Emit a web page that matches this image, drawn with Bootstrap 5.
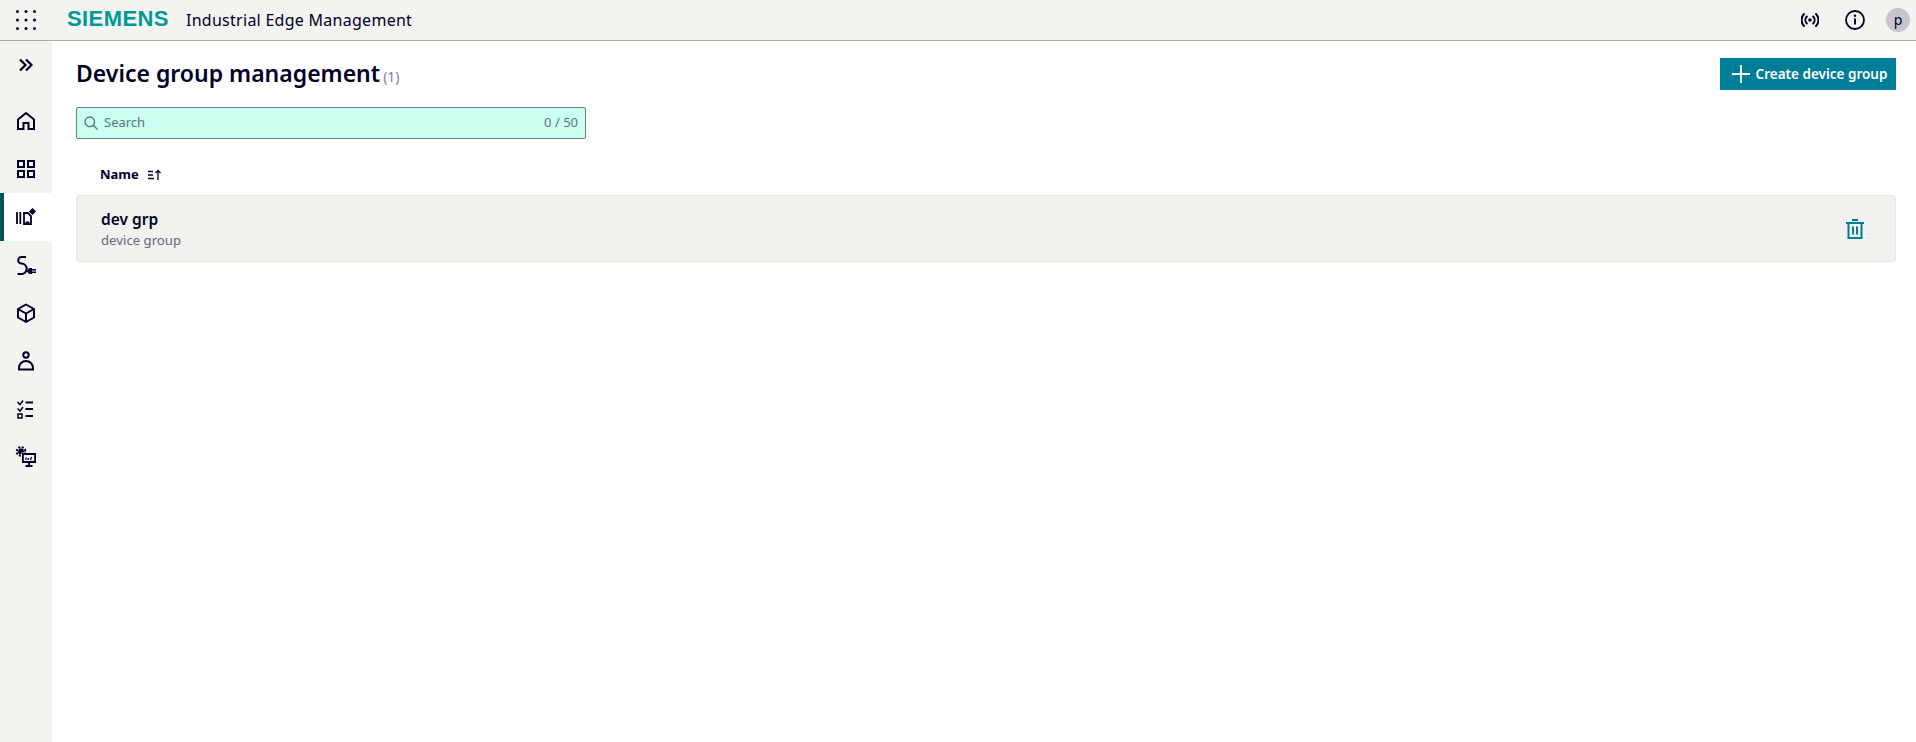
<!DOCTYPE html>
<html lang="en">
<head>
  <meta charset="UTF-8">
  <title>Device group management</title>
  <link href="https://cdn.jsdelivr.net/npm/bootstrap@5.3.0/dist/css/bootstrap.min.css" rel="stylesheet">
  <style>
    body { font-family: "Noto Sans", "Open Sans", sans-serif; color: #000028; background: #fff; font-size: 14px; }
    .app-head { height: 41px; background: #f3f3ef; border-bottom: 1px solid #a9a9b3; }
    .app-launch { width: 52px; }
    .brand-logo { width: 102px; margin: 0 0 2px 15px; font-family: "Liberation Sans", sans-serif; font-weight: 700; font-size: 22px; line-height: 1; letter-spacing: .4px; color: #009999; white-space: nowrap; }
    .brand-title { margin: 0 0 1px 17px; font-size: 16px; letter-spacing: .27px; }
    .head-tools { padding-right: 6px; }
    .tool-signal { margin-right: 26px; }
    .tool-info { margin-right: 21px; }
    .avatar { width: 24px; height: 24px; border-radius: 50%; background: #c5c5cf; font-size: 14px; line-height: 23px; text-align: center; }
    .side-rail { width: 52px; height: 701px; background: #f3f3ef; }
    .rail-item { height: 48px; display: flex; align-items: center; justify-content: center; color: #000028; }
    .rail-gap { height: 8px; }
    .rail-item.is-active { background: #fff; box-shadow: inset 4px 0 0 #005159; }
    .page-body { padding: 0 20px 0 24px; min-width: 0; }
    .page-head { height: 66px; padding-top: 16px; }
    .page-title { font-size: 23px; font-weight: 600; line-height: 32px; margin: 0; }
    .page-count { font-size: 14px; font-weight: 400; color: #7d8099; margin-left: 3px; }
    .btn-create { height: 32px; width: 176px; margin-top: 1px; background: #007d99; border: 0; border-radius: 0; color: #fff; font-size: 13.5px; font-weight: 600; padding: 0 0 0 3px; gap: 6px; }
    .search-box { width: 510px; height: 32px; background: #ccfff0; border: 1px solid #5f8691; border-radius: 2px; padding: 0 7px; color: #557482; font-size: 13px; }
    .search-label { margin-left: 2px; }
    .sort-head { height: 56px; padding: 16px 0 0 24px; font-size: 13px; font-weight: 700; }
    .sort-icon { margin-left: 9px; }
    .group-row { height: 67px; background: #f1f1ed; border: 1px solid #e6e6e1; border-radius: 4px; padding: 0 31px 0 24px; }
    .group-name { font-size: 15.5px; font-weight: 600; line-height: 22px; margin-top: 1px; }
    .group-sub { font-size: 13.2px; color: #66667e; line-height: 20px; }
  </style>
</head>
<body>

<!-- Barra in alto -->
<header class="app-head d-flex align-items-center">
  <div class="app-launch d-flex justify-content-center">
    <svg width="22" height="22" viewBox="0 0 22 22" fill="#000028">
      <circle cx="2.500" cy="2.500" r="1.500"/><circle cx="11" cy="2.500" r="1.500"/><circle cx="19.500" cy="2.500" r="1.500"/>
      <circle cx="2.500" cy="11" r="1.500"/><circle cx="11" cy="11" r="1.500"/><circle cx="19.500" cy="11" r="1.500"/>
      <circle cx="2.500" cy="19.500" r="1.500"/><circle cx="11" cy="19.500" r="1.500"/><circle cx="19.500" cy="19.500" r="1.500"/>
    </svg>
  </div>
  <div class="brand-logo">SIEMENS</div>
  <div class="brand-title">Industrial Edge Management</div>
  <div class="head-tools d-flex align-items-center ms-auto">
    <svg class="tool-signal" width="18" height="18" viewBox="0 0 18 18" fill="none" stroke="#000028" stroke-width="2" stroke-linecap="round">
      <circle cx="9" cy="9" r="1.800" fill="#000028" stroke="none"/>
      <path d="M5.800 5.500a5 5 0 0 0 0 7M12.200 5.500a5 5 0 0 1 0 7M3 3a8.500 8.500 0 0 0 0 12M15 3a8.500 8.500 0 0 1 0 12"/>
    </svg>
    <svg class="tool-info" width="20" height="20" viewBox="0 0 20 20" fill="none" stroke="#000028" stroke-width="1.800">
      <circle cx="10" cy="10" r="9"/>
      <path d="M10 8.500v6" stroke-width="2"/>
      <circle cx="10" cy="5.800" r="1.200" fill="#000028" stroke="none"/>
    </svg>
    <div class="avatar">p</div>
  </div>
</header>

<div class="d-flex">
  <!-- Menu laterale -->
  <nav class="side-rail flex-shrink-0">
    <div class="rail-item">
      <svg width="16" height="16" viewBox="0 0 16 16" fill="none" stroke="#000028" stroke-width="2.200">
        <path d="M2 2.500 7.500 8 2 13.500M8 2.500 13.500 8 8 13.500"/>
      </svg>
    </div>
    <div class="rail-gap"></div>
    <div class="rail-item">
      <svg width="20" height="20" viewBox="0 0 20 20" fill="none" stroke="#000028" stroke-width="2">
        <path d="M2 8.500 10 2l8 6.500V18h-5.500v-6h-5v6H2z"/>
      </svg>
    </div>
    <div class="rail-item">
      <svg width="20" height="20" viewBox="0 0 20 20" fill="none" stroke="#000028" stroke-width="2">
        <rect x="2" y="2" width="6" height="6"/><rect x="12" y="2" width="6" height="6"/>
        <rect x="2" y="12" width="6" height="6"/><rect x="12" y="12" width="6" height="6"/>
      </svg>
    </div>
    <div class="rail-item is-active">
      <svg width="22" height="22" viewBox="0 0 22 22" fill="none" stroke="#000028" stroke-width="2">
        <path d="M2 6v12M5.300 6v12" stroke-width="1.800"/>
        <path d="M9 18V7h4l3 3v8h-2.500v-1.500h-2V18z" stroke-width="1.800"/>
        <path d="M17.500 2 21 5.500 17.500 9 14 5.500z" fill="#000028" stroke="none"/>
      </svg>
    </div>
    <div class="rail-item">
      <svg width="20" height="20" viewBox="0 0 20 20" fill="none" stroke="#000028" stroke-width="2">
        <path d="M10 2H5.500a3.300 3.300 0 0 0 0 6.600a5.200 5.200 0 0 1 0 10.400H1.500"/>
        <path d="M16 13v6h-1.500a3 3 0 0 1 0-6z" fill="#000028" stroke="none"/>
        <path d="M15.500 14.700H20M15.500 17.300H20M10 16h3" stroke-width="1.500"/>
      </svg>
    </div>
    <div class="rail-item">
      <svg width="20" height="20" viewBox="0 0 20 20" fill="none" stroke="#000028" stroke-width="2" stroke-linejoin="round">
        <path d="M10 1.500 18 6v8.500L10 19l-8-4.500V6z"/><path d="M2 6l8 4.500L18 6M10 10.500V19"/>
      </svg>
    </div>
    <div class="rail-item">
      <svg width="20" height="20" viewBox="0 0 20 20" fill="none" stroke="#000028" stroke-width="2">
        <circle cx="10" cy="4" r="2.700"/><path d="M3 18.500v-1.500a7 7 0 0 1 14 0v1.500z"/>
      </svg>
    </div>
    <div class="rail-item">
      <svg width="20" height="20" viewBox="0 0 20 20" fill="none" stroke="#000028">
        <path d="M1.500 3 4 5.500 7 1.500M1.500 9.500 4 12l3-4" stroke-width="1.500"/>
        <rect x="2" y="15" width="4" height="4" stroke-width="1.500"/>
        <path d="M9.500 3.500H17M9.500 10H17M9.500 17H17" stroke-width="2"/>
      </svg>
    </div>
    <div class="rail-item">
      <svg width="22" height="22" viewBox="0 0 22 22" fill="none" stroke="#000028">
        <circle cx="6" cy="5.500" r="3" fill="#000028" stroke="none"/>
        <circle cx="6" cy="5.500" r="4.300" stroke-width="2" stroke-dasharray="2 1.400"/>
        <rect x="6.500" y="6.500" width="15" height="11" fill="#f3f3ef" stroke="none"/>
        <rect x="7" y="7" width="14" height="10" fill="#000028" stroke="none"/>
        <rect x="8.800" y="9" width="10.400" height="6" fill="#f3f3ef" stroke="none"/>
        <path d="M11 14v-2.500M13 14l.5-2M15.500 14l1-3" stroke-width="1.300"/>
        <path d="M14 17v2M10.500 20h7" stroke-width="2"/>
      </svg>
    </div>
  </nav>

  <!-- Contenuto -->
  <main class="page-body flex-grow-1">
    <div class="page-head d-flex justify-content-between align-items-start">
      <h1 class="page-title">Device group management<span class="page-count">(1)</span></h1>
      <button type="button" class="btn btn-create d-flex align-items-center justify-content-center">
        <svg width="18" height="18" viewBox="0 0 18 18" stroke="#fff" stroke-width="1.800"><path d="M9 0v18M0 9h18"/></svg>
        Create device group
      </button>
    </div>

    <div class="search-box d-flex align-items-center">
      <svg class="me-1" width="14" height="14" viewBox="0 0 14 14" fill="none" stroke="#557482" stroke-width="1.300">
        <circle cx="5.800" cy="5.800" r="4.800"/><path d="m9.300 9.300 4.200 4.200"/>
      </svg>
      <span class="search-label flex-grow-1">Search</span>
      <span>0 / 50</span>
    </div>

    <div class="sort-head d-flex align-items-center">
      Name
      <svg class="sort-icon" width="14" height="12" viewBox="0 0 14 12" fill="none" stroke="#000028" stroke-width="1.300">
        <path d="M0 2.500h5M0 6h5M0 9.500h6M10 11V1.500M7.500 4 10 1.500 12.500 4"/>
      </svg>
    </div>

    <div class="group-row d-flex align-items-center justify-content-between">
      <div>
        <div class="group-name">dev grp</div>
        <div class="group-sub">device group</div>
      </div>
      <svg width="18" height="20" viewBox="0 0 18 20" fill="none" stroke="#007d99" stroke-width="2">
        <path d="M6 1h6M0 4h18M2.500 4v15h13V4M7 7.500v8M11 7.500v8"/>
      </svg>
    </div>
  </main>
</div>

<script src="https://cdn.jsdelivr.net/npm/bootstrap@5.3.0/dist/js/bootstrap.bundle.min.js"></script>
</body>
</html>
